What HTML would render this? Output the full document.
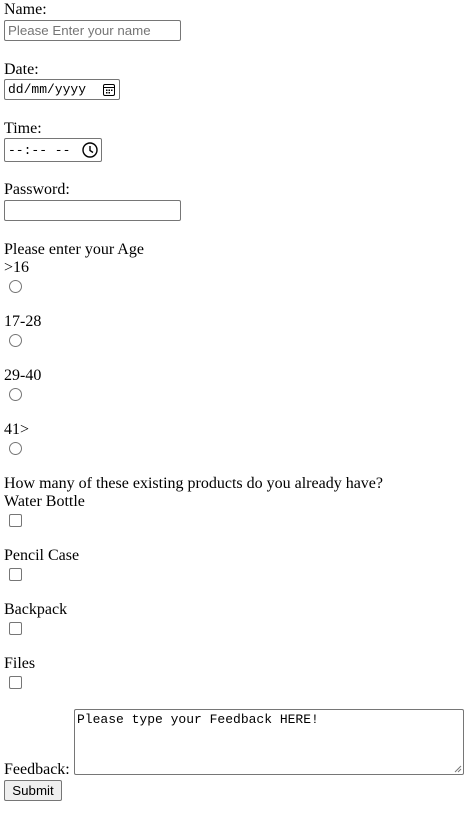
<!DOCTYPE html>
<html><head><meta charset="utf-8">
<style>
html,body{margin:0;padding:0;background:#fff;width:471px;height:816px;overflow:hidden;position:relative;font-family:"Liberation Serif",serif;font-size:16px;color:#000}
.t{position:absolute;left:4px;line-height:18px;white-space:nowrap}
.box{position:absolute;border:1px solid #767676;border-radius:2px;background:#fff;box-sizing:border-box}
.mono{font-family:"Liberation Mono",monospace;font-size:13px}
.r{position:absolute;left:9px;width:13px;height:13px;border:1px solid #767676;border-radius:50%;box-sizing:border-box}
.c{position:absolute;left:9px;width:13px;height:13px;border:1px solid #767676;border-radius:2px;box-sizing:border-box}
</style></head><body>
<div class="t" style="top:1px">Name:</div>
<div class="box" style="left:4px;top:20px;width:177px;height:21px;font-family:'Liberation Sans',sans-serif;font-size:13.3px;color:#757575;padding:2px 0 0 3px">Please Enter your name</div>

<div class="t" style="top:61px">Date:</div>
<div class="box mono" style="left:4px;top:79px;width:116px;height:21px;padding:2px 0 0 3px">dd/mm/yyyy
<svg style="position:absolute;right:4px;top:3px" width="12" height="13" viewBox="0 0 12 13"><rect x="0.5" y="1.5" width="11" height="11" rx="1.5" fill="none" stroke="#000"/><line x1="0.5" y1="4.5" x2="11.5" y2="4.5" stroke="#000"/><g fill="#000"><rect x="3" y="6.5" width="1.5" height="1.5"/><rect x="5.5" y="6.5" width="1.5" height="1.5"/><rect x="8" y="6.5" width="1.5" height="1.5"/><rect x="3" y="9" width="1.5" height="1.5"/><rect x="5.5" y="9" width="1.5" height="1.5"/></g></svg></div>

<div class="t" style="top:120px">Time:</div>
<div class="box mono" style="left:4px;top:138px;width:98px;height:24px;padding:4px 0 0 3px">--:-- --
<svg style="position:absolute;right:3px;top:3px" width="16" height="16" viewBox="0 0 16 16"><circle cx="8" cy="8" r="7" fill="none" stroke="#000" stroke-width="1.4"/><path d="M8 4v4.5l3 2" fill="none" stroke="#000" stroke-width="1.4"/></svg></div>

<div class="t" style="top:181px">Password:</div>
<div class="box" style="left:4px;top:200px;width:177px;height:21px"></div>

<div class="t" style="top:241px">Please enter your Age</div>
<div class="t" style="top:259px">&gt;16</div>
<div class="r" style="top:280px"></div>
<div class="t" style="top:313px">17-28</div>
<div class="r" style="top:334px"></div>
<div class="t" style="top:367px">29-40</div>
<div class="r" style="top:388px"></div>
<div class="t" style="top:421px">41&gt;</div>
<div class="r" style="top:442px"></div>

<div class="t" style="top:475px">How many of these existing products do you already have?</div>
<div class="t" style="top:493px">Water Bottle</div>
<div class="c" style="top:514px"></div>
<div class="t" style="top:547px">Pencil Case</div>
<div class="c" style="top:568px"></div>
<div class="t" style="top:601px">Backpack</div>
<div class="c" style="top:622px"></div>
<div class="t" style="top:655px">Files</div>
<div class="c" style="top:676px"></div>

<div class="t" style="top:761px">Feedback:</div>
<div class="box mono" style="left:74px;top:709px;width:390px;height:66px;padding:2px 0 0 2px">Please type your Feedback HERE!
<svg style="position:absolute;right:1px;bottom:1px" width="8" height="8" viewBox="0 0 8 8"><path d="M7 1L1 7M7 4L4 7" stroke="#777"/></svg></div>
<div class="box" style="left:4px;top:780px;width:58px;height:21px;background:#efefef;font-family:'Liberation Sans',sans-serif;font-size:13.3px;text-align:center;line-height:19px">Submit</div>
</body></html>
